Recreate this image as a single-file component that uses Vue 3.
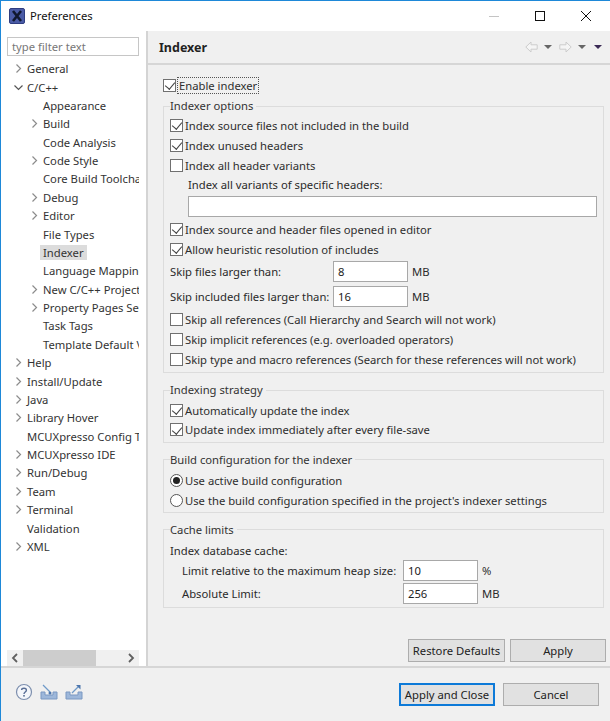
<script setup>
const tree = [
  { t: 'General', a: 'r', d: 0 },
  { t: 'C/C++', a: 'd', d: 0 },
  { t: 'Appearance', d: 1 },
  { t: 'Build', a: 'r', d: 1 },
  { t: 'Code Analysis', d: 1 },
  { t: 'Code Style', a: 'r', d: 1 },
  { t: 'Core Build Toolchains', d: 1 },
  { t: 'Debug', a: 'r', d: 1 },
  { t: 'Editor', a: 'r', d: 1 },
  { t: 'File Types', d: 1 },
  { t: 'Indexer', d: 1, sel: true },
  { t: 'Language Mappings', d: 1 },
  { t: 'New C/C++ Project Wizard', a: 'r', d: 1 },
  { t: 'Property Pages Settings', a: 'r', d: 1 },
  { t: 'Task Tags', d: 1 },
  { t: 'Template Default Values', d: 1 },
  { t: 'Help', a: 'r', d: 0 },
  { t: 'Install/Update', a: 'r', d: 0 },
  { t: 'Java', a: 'r', d: 0 },
  { t: 'Library Hover', a: 'r', d: 0 },
  { t: 'MCUXpresso Config Tools', d: 0 },
  { t: 'MCUXpresso IDE', a: 'r', d: 0 },
  { t: 'Run/Debug', a: 'r', d: 0 },
  { t: 'Team', a: 'r', d: 0 },
  { t: 'Terminal', a: 'r', d: 0 },
  { t: 'Validation', d: 0 },
  { t: 'XML', a: 'r', d: 0 },
]
</script>

<template>
  <div class="win">
    <header class="titlebar">
      <svg class="appicon" width="16" height="16" viewBox="0 0 16 16">
        <rect x="0.5" y="0.5" width="15" height="15" rx="1.5" fill="#4a5ba6" stroke="#2f3d80" />
        <path d="M4 3 L12 13 M12 3 L4 13" stroke="#101830" stroke-width="2.6" />
      </svg>
      <span class="wintitle">Preferences</span>
      <div class="winbtns">
        <svg width="46" height="30" viewBox="0 0 46 30"><path d="M18 15.5H28" stroke="#c4c4c4" /></svg>
        <svg width="46" height="30" viewBox="0 0 46 30"><rect x="18.5" y="10.5" width="9" height="9" fill="none" stroke="#111" /></svg>
        <svg width="46" height="30" viewBox="0 0 46 30"><path d="M18 10L28 20M28 10L18 20" stroke="#111" /></svg>
      </div>
    </header>

    <div class="body">
      <aside class="side">
        <div class="filter">type filter text</div>
        <div class="tree">
          <div v-for="n in tree" :key="n.t" class="node" :class="'d' + n.d">
            <span class="arrow">
              <svg v-if="n.a === 'r'" width="9" height="9" viewBox="0 0 9 9"><path d="M2.5 0.5L6.5 4.5L2.5 8.5" fill="none" stroke="#8c8c8c" stroke-width="1.2" /></svg>
              <svg v-if="n.a === 'd'" width="9" height="9" viewBox="0 0 9 9"><path d="M0.5 2.5L4.5 6.5L8.5 2.5" fill="none" stroke="#555" stroke-width="1.2" /></svg>
            </span>
            <span class="label" :class="{ sel: n.sel }">{{ n.t }}</span>
          </div>
        </div>
        <div class="hscroll">
          <svg class="sa" width="16" height="16" viewBox="0 0 16 16"><path d="M10 4L6 8L10 12" fill="none" stroke="#606060" stroke-width="1.8" /></svg>
          <div class="track"><div class="thumb"></div></div>
          <svg class="sa" width="16" height="16" viewBox="0 0 16 16"><path d="M6 4L10 8L6 12" fill="none" stroke="#606060" stroke-width="1.8" /></svg>
        </div>
      </aside>

      <main class="pane">
        <div class="panehead">
          <h1>Indexer</h1>
          <div class="nav">
            <svg width="13" height="12" viewBox="0 0 13 12"><path d="M0.8 6L6 1V3.8H12.2V8.2H6V11Z" fill="#f5f5f5" stroke="#cccccc" /></svg>
            <span class="tri t1"></span>
            <svg width="13" height="12" viewBox="0 0 13 12"><path d="M12.2 6L7 1V3.8H0.8V8.2H7V11Z" fill="#f5f5f5" stroke="#cccccc" /></svg>
            <span class="tri t2"></span>
            <span class="tri dark"></span>
          </div>
        </div>

        <div class="content">
          <label class="chk enable"><i class="box on"></i><span class="focus">Enable indexer</span></label>

          <fieldset class="grp g1">
            <legend>Indexer options</legend>
            <label class="chk"><i class="box on"></i>Index source files not included in the build</label>
            <label class="chk"><i class="box on"></i>Index unused headers</label>
            <label class="chk"><i class="box"></i>Index all header variants</label>
            <div class="specific">
              <div class="speclabel">Index all variants of specific headers:</div>
              <div class="input wide"></div>
            </div>
            <label class="chk"><i class="box on"></i>Index source and header files opened in editor</label>
            <label class="chk"><i class="box on"></i>Allow heuristic resolution of includes</label>
            <div class="row">
              <span class="rowlabel">Skip files larger than:</span>
              <div class="input num">8</div><span class="unit">MB</span>
            </div>
            <div class="row">
              <span class="rowlabel">Skip included files larger than:</span>
              <div class="input num">16</div><span class="unit">MB</span>
            </div>
            <label class="chk"><i class="box"></i>Skip all references (Call Hierarchy and Search will not work)</label>
            <label class="chk"><i class="box"></i>Skip implicit references (e.g. overloaded operators)</label>
            <label class="chk"><i class="box"></i>Skip type and macro references (Search for these references will not work)</label>
          </fieldset>

          <fieldset class="grp g2">
            <legend>Indexing strategy</legend>
            <label class="chk"><i class="box on"></i>Automatically update the index</label>
            <label class="chk"><i class="box on"></i>Update index immediately after every file-save</label>
          </fieldset>

          <fieldset class="grp g3">
            <legend>Build configuration for the indexer</legend>
            <label class="chk"><i class="radio on"></i>Use active build configuration</label>
            <label class="chk"><i class="radio"></i>Use the build configuration specified in the project's indexer settings</label>
          </fieldset>

          <fieldset class="grp g4">
            <legend>Cache limits</legend>
            <div class="cachehead">Index database cache:</div>
            <div class="row cache">
              <span class="rowlabel2">Limit relative to the maximum heap size:</span>
              <div class="input num">10</div><span class="unit">%</span>
            </div>
            <div class="row cache">
              <span class="rowlabel2">Absolute Limit:</span>
              <div class="input num">256</div><span class="unit">MB</span>
            </div>
          </fieldset>
        </div>

        <div class="panebtns">
          <button class="btn restore">Restore Defaults</button>
          <button class="btn apply">Apply</button>
        </div>
      </main>
    </div>

    <footer class="foot">
      <div class="footicons">
        <svg width="18" height="18" viewBox="0 0 18 18"><circle cx="9" cy="9" r="7.5" fill="#f4f6fa" stroke="#7d8fae" stroke-width="1.2" /><path d="M6.6 7C6.8 4.6 11.4 4.6 11.4 7.2C11.4 9 9 9 9 11" fill="none" stroke="#5a6f96" stroke-width="1.4" /><rect x="8.2" y="12" width="1.6" height="1.6" fill="#5a6f96" /></svg>
        <svg width="18" height="16" viewBox="0 0 18 16"><path d="M1 8V15H17V8H13V11H5V8Z" fill="#9db7da" stroke="#7b98c2" /><path d="M3 1L10 8" stroke="#6f9ac8" stroke-width="1.3" /><circle cx="10" cy="9" r="1.5" fill="#4d76ad" /></svg>
        <svg width="18" height="16" viewBox="0 0 18 16"><path d="M1 8V15H17V8H13V11H5V8Z" fill="#9db7da" stroke="#7b98c2" /><path d="M7 9L14 2" stroke="#6f9ac8" stroke-width="1.3" /><path d="M11 1H15.5V5.5Z" fill="#4d76ad" /></svg>
      </div>
      <div class="footbtns">
        <button class="btn close">Apply and Close</button>
        <button class="btn cancel">Cancel</button>
      </div>
    </footer>
  </div>
</template>

<style scoped>
* { box-sizing: border-box; }
.win {
  width: 610px;
  height: 721px;
  background: #f0f0f0;
  border-top: 1px solid #1e88d8;
  border-left: 1px solid #1e88d8;
  display: flex;
  flex-direction: column;
  font: 11.25px "Noto Sans", sans-serif;
  color: #2a2a2a;
  overflow: hidden;
}
.titlebar {
  height: 30px;
  background: #fff;
  display: flex;
  align-items: center;
  padding-left: 8px;
  flex: none;
}
.appicon { margin-right: 5px; }
.wintitle { color: #111; margin-top: -1px; }
.winbtns { margin-left: auto; display: flex; margin-right: 1px; }
.winbtns svg { display: block; }

.body { flex: 1; display: flex; min-height: 0; }
.side {
  width: 147px;
  background: #fff;
  border-right: 2px solid #d4d4d4;
  padding: 6px 7px 0 6px;
  display: flex;
  flex-direction: column;
  flex: none;
  overflow: hidden;
}
.filter {
  height: 19px;
  border: 1px solid #c6c6c6;
  padding-left: 4px;
  line-height: 17px;
  color: #777;
  flex: none;
}
.tree { flex: 1; margin-top: 3.5px; overflow: hidden; }
.node {
  height: 18.38px;
  display: flex;
  align-items: center;
  white-space: nowrap;
}
.node.d0 { padding-left: 7px; }
.node.d1 { padding-left: 23px; }
.arrow { width: 12px; margin-right: 1px; flex: none; display: flex; align-items: center; }
.label { padding: 0 3px 0 0; color: #333; }
.label.sel { background: #dcdcdc; padding: 0 3px; margin-left: -3px; }
.hscroll { height: 16px; display: flex; align-items: center; background: #f0f0f0; flex: none; }
.sa { flex: none; }
.track { flex: 1; height: 100%; }
.thumb { width: 73px; height: 100%; background: #cdcdcd; }

.pane { flex: 1; display: flex; flex-direction: column; min-width: 0; }
.panehead {
  height: 34px;
  flex: none;
  display: flex;
  align-items: center;
  padding: 0 8px 0 11px;
  border-bottom: 2px solid #d6d6d6;
}
.panehead h1 { font-size: 12.5px; font-weight: 700; margin: 0; color: #222; }
.nav { margin-left: auto; display: flex; align-items: center; }
.nav svg { display: block; margin-right: 6px; }
.tri {
  width: 0; height: 0;
  border-left: 4px solid transparent;
  border-right: 4px solid transparent;
  border-top: 4px solid #666;
}
.t1 { margin-right: 7px; }
.t2 { margin-right: 8px; }
.tri.dark { border-top-color: #3a2a55; }

.content { flex: 1; padding: 10px 6px 0 14px; display: flex; flex-direction: column; }
.chk { display: flex; align-items: center; height: 20px; white-space: nowrap; color: #2e2e2e; }
.enable { padding-left: 1px; }
.focus { outline: 1px dotted #555; padding: 0 1px; }
.box {
  width: 13px; height: 13px;
  border: 1px solid #707070;
  background: #fff;
  margin-right: 2px;
  flex: none;
  position: relative;
}
.box.on::after {
  content: "";
  position: absolute;
  left: 2.5px; top: 0.5px;
  width: 5px; height: 8px;
  border-right: 1.3px solid #444;
  border-bottom: 1.3px solid #444;
  transform: rotate(40deg);
}
.radio {
  width: 13px; height: 13px;
  border: 1px solid #555;
  border-radius: 50%;
  background: #fff;
  margin-right: 2px;
  flex: none;
  position: relative;
}
.radio.on::after {
  content: "";
  position: absolute;
  left: 2px; top: 2px;
  width: 7px; height: 7px;
  border-radius: 50%;
  background: #222;
}
.grp {
  border: 1px solid #dcdcdc;
  margin: 0 0 0 1px;
  padding: 0 0 0 6px;
  min-width: 0;
}
.grp legend { padding: 0 3px 0 0; line-height: 16px; color: #333; }
.g1 { margin-top: 3px; padding-top: 1px; padding-bottom: 3px; }
.g2 { margin-top: 9px; padding-top: 2px; padding-bottom: 2px; }
.g2 .chk + .chk { margin-top: -0.5px; }
.g3 { margin-top: 9px; padding-top: 3px; padding-bottom: 1px; }
.g4 { margin-top: 9px; padding-top: 3px; padding-bottom: 2px; }
.specific { padding-left: 18px; }
.speclabel { height: 19px; line-height: 19px; }
.input {
  height: 21px;
  border: 1px solid #a8a8a8;
  background: #fff;
  line-height: 19px;
  padding-left: 4px;
  color: #222;
}
.wide { width: 409px; margin: 2px 0; }
.row { display: flex; align-items: center; height: 25px; }
.rowlabel { width: 163px; white-space: nowrap; }
.rowlabel2 { width: 233px; padding-left: 12px; white-space: nowrap; }
.num { width: 75px; }
.unit { margin-left: 4px; }
.cachehead { height: 20px; line-height: 20px; margin-bottom: -2px; }
.row.cache { height: 23px; }

.panebtns { flex: none; display: flex; justify-content: flex-end; gap: 5px; padding: 0 4px 4px 0; }
.btn {
  height: 23px;
  border: 1px solid #adadad;
  background: #e1e1e1;
  font: 11.25px "Noto Sans", sans-serif;
  color: #222;
  padding: 0;
}
.restore { width: 97px; }
.apply { width: 96px; }
.foot {
  flex: none;
  height: 55px;
  border-top: 2px solid #d6d6d6;
  display: flex;
  align-items: flex-start;
  padding: 15px 11px 0 14px;
}
.footicons { display: flex; align-items: center; gap: 7px; }
.footicons svg { display: block; }
.footbtns { margin-left: auto; display: flex; gap: 8px; }
.close { width: 96px; border: 2px solid #0d7ad8; }
.cancel { width: 96px; }
</style>

<style>
html, body { margin: 0; padding: 0; background: #f0f0f0; }
</style>
